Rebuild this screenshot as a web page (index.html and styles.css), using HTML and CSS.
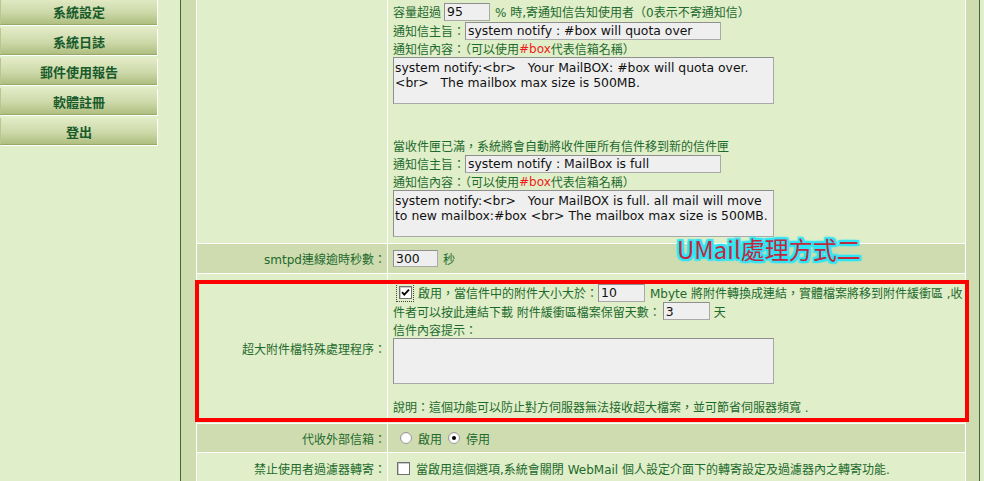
FILE: index.html
```html
<!DOCTYPE html>
<html lang="zh-Hant">
<head>
<meta charset="utf-8">
<title>UMail 設定</title>
<link rel="stylesheet" href="styles.css">
</head>
<body>
<div class="page">
  <nav class="side">
    <div class="btn">系統設定</div>
    <div class="btn">系統日誌</div>
    <div class="btn">郵件使用報告</div>
    <div class="btn">軟體註冊</div>
    <div class="btn">登出</div>
  </nav>
  <main class="main">
    <div class="tbl">
      <div class="lab"></div>
      <div class="val r-top">
        <div class="ln">容量超過<input class="inp w46 ml3 mr5" value="95">% 時,寄通知信告知使用者（0表示不寄通知信）</div>
        <div class="ln">通知信主旨：<input class="inp w256" value="system notify : #box will quota over"></div>
        <div class="ln h17">通知信內容：（可以使用<span class="red">#box</span>代表信箱名稱）</div>
        <textarea class="ta h47">system notify:&lt;br&gt;   Your MailBOX: #box will quota over. &lt;br&gt;   The mailbox max size is 500MB.</textarea>
        <div class="ln h18 mt32">當收件匣已滿，系統將會自動將收件匣所有信件移到新的信件匣</div>
        <div class="ln">通知信主旨：<input class="inp w256" value="system notify : MailBox is full"></div>
        <div class="ln h17">通知信內容：（可以使用<span class="red">#box</span>代表信箱名稱）</div>
        <textarea class="ta h47">system notify:&lt;br&gt;   Your MailBOX is full. all mail will move
to new mailbox:#box &lt;br&gt; The mailbox max size is 500MB.</textarea>
      </div>

      <div class="lab dk">smtpd連線逾時秒數：</div>
      <div class="val dk r-smtp">
        <input class="inp w45 h17 mr5" value="300">秒
      </div>

      <div class="lab">超大附件檔特殊處理程序：</div>
      <div class="val r-big">
        <div class="ln">
          <span class="focus"><span class="cb"><svg viewBox="0 0 11 11" width="11" height="11"><path d="M2 5.2 L4.3 7.6 L9 2.6" fill="none" stroke="#000" stroke-width="1.8"/></svg></span></span>啟用，當信件中的附件大小大於：<input class="inp w47 mr5" value="10">Mbyte 將附件轉換成連結，實體檔案將移到附件緩衝區 ,收
        </div>
        <div class="ln h18">件者可以按此連結下載 附件緩衝區檔案保留天數：<input class="inp w47 ml2 mr4" value="3">天</div>
        <div class="ln h18">信件內容提示：</div>
        <textarea class="ta h46"></textarea>
        <div class="ln mt13">說明：這個功能可以防止對方伺服器無法接收超大檔案，並可節省伺服器頻寬 .</div>
      </div>

      <div class="lab dk">代收外部信箱：</div>
      <div class="val dk r-pop">
        <span class="rb ml7"></span><span class="opt">啟用</span><span class="rb on ml6"><span class="dot"></span></span><span class="opt">停用</span>
      </div>

      <div class="lab">禁止使用者過濾器轉寄：</div>
      <div class="val r-fw">
        <span class="cb ml4"></span><span class="opt">當啟用這個選項,系統會關閉 WebMail 個人設定介面下的轉寄設定及過濾器內之轉寄功能.</span>
      </div>
    </div>
  </main>
</div>
<div class="note">UMail處理方式二</div>
<div class="mark"></div>
</body>
</html>
```

FILE: styles.css
```css
* { box-sizing: border-box; }
html, body { margin: 0; padding: 0; }
body {
  width: 984px;
  height: 481px;
  overflow: hidden;
  position: relative;
  background: #e0eec9;
  font-family: "DejaVu Sans", "Noto Sans CJK TC", sans-serif;
  font-size: 12px;
  color: #1d6a2d;
}
.page { display: flex; align-items: flex-start; }

.side { width: 180px; flex: none; }
.btn {
  width: 157px;
  height: 27px;
  margin-bottom: 3px;
  background: linear-gradient(#e3ebc7, #cdd9a9 55%, #afbe80);
  border-bottom: 1px solid #98a866;
  border-left: 1px solid #b9c68f;
  box-shadow: 1px 1px 0 #ffffff;
  display: flex;
  align-items: center;
  justify-content: center;
  font-family: "Noto Sans CJK TC", sans-serif;
  font-weight: 700;
  font-size: 13px;
  color: #175a2b;
}
.btn:first-child { margin-top: -2px; }

.main {
  width: 800px;
  height: 481px;
  flex: none;
  border-left: 1px solid #3f6b32;
  border-right: 1px solid #3f6b32;
  background: #cfdcb0;
  padding: 0 13px 0 15px;
}
.tbl {
  display: grid;
  grid-template-columns: 190px 577px;
  gap: 1px;
  background: #ffffff;
  padding: 0 1px 1px;
}
.lab, .val { background: #e0eec9; }
.lab.dk, .val.dk { background: #cfdcb0; }
.lab {
  display: flex;
  align-items: center;
  justify-content: flex-end;
  padding-right: 1px;
  white-space: nowrap;
}
.val { padding-left: 5px; }

.r-top { height: 243px; padding-top: 2px; }
.r-smtp { height: 29px; display: flex; align-items: center; }
.r-big { height: 149px; padding-top: 9px; }
.r-pop { height: 28px; display: flex; align-items: center; }
.r-fw { height: 30px; display: flex; align-items: center; }

.ln {
  height: 19px;
  display: flex;
  align-items: center;
  white-space: nowrap;
}
.h17 { height: 17px; }
.h18 { height: 18px; }
.mt32 { margin-top: 32px; }
.mt13 { margin-top: 13px; }
.ml2 { margin-left: 2px; }
.ml3 { margin-left: 3px; }
.ml4 { margin-left: 4px; }
.ml6 { margin-left: 6px; }
.ml7 { margin-left: 7px; }
.mr4 { margin-right: 4px; }
.mr5 { margin-right: 5px; }

.red { color: #ee1c1c; }

.inp {
  height: 18px;
  padding: 0 2px;
  margin-top: 0;
  margin-bottom: 0;
  border: 1px solid #a9a9a9;
  border-top-color: #8f8f8f;
  border-left-color: #8f8f8f;
  background: #efefef;
  font-family: "DejaVu Sans", sans-serif;
  font-size: 12.4px;
  color: #111;
  outline: none;
}
.inp.h17 { height: 17px; }
.w45 { width: 45px; }
.w46 { width: 46px; }
.w47 { width: 47px; }
.w256 { width: 256px; }

.ta {
  display: block;
  width: 381px;
  margin: 0;
  padding: 2px 1px;
  border: 1px solid #a9a9a9;
  border-top-color: #8f8f8f;
  border-left-color: #8f8f8f;
  background: #efefef;
  font-family: "DejaVu Sans", sans-serif;
  font-size: 12.4px;
  line-height: 15px;
  color: #111;
  resize: none;
  overflow: hidden;
}
.h47 { height: 47px; }
.h46 { height: 46px; }

.focus {
  width: 18px;
  height: 19px;
  margin-left: 3px;
  margin-right: 4px;
  border: 1px dotted #444;
  display: flex;
  align-items: center;
  justify-content: center;
}
.cb {
  width: 13px;
  height: 13px;
  flex: none;
  border: 1px solid #707070;
  background: #fff;
  box-shadow: inset 1px 1px 0 #c8c8c8;
  display: flex;
  align-items: center;
  justify-content: center;
}
.rb {
  width: 12px;
  height: 12px;
  flex: none;
  border-radius: 50%;
  border: 1px solid #9a9a9a;
  background: radial-gradient(circle at 60% 60%, #ffffff 50%, #dcdcdc);
  display: flex;
  align-items: center;
  justify-content: center;
}
.dot { width: 4px; height: 4px; border-radius: 50%; background: #000; }
.opt { margin-left: 6px; white-space: nowrap; }

.note {
  position: absolute;
  left: 677px;
  top: 237px;
  font-family: "Noto Sans CJK TC", sans-serif;
  font-size: 24px;
  line-height: 24px;
  color: #c0283f;
  text-shadow:
    1px 1px 0 #2fe4f4, -1px -1px 0 #2fe4f4, 1px -1px 0 #2fe4f4, -1px 1px 0 #2fe4f4,
    2px 0 1px #2fe4f4, -2px 0 1px #2fe4f4, 0 2px 1px #2fe4f4, 0 -2px 1px #2fe4f4,
    2px 2px 1px #2fe4f4, -2px -2px 1px #2fe4f4, 2px -2px 1px #2fe4f4, -2px 2px 1px #2fe4f4,
    0 0 4px #7ff2fb;
  white-space: nowrap;
}
.mark {
  position: absolute;
  left: 195px;
  top: 280px;
  width: 774px;
  height: 142px;
  border: 4px solid #ff0000;
}
```
